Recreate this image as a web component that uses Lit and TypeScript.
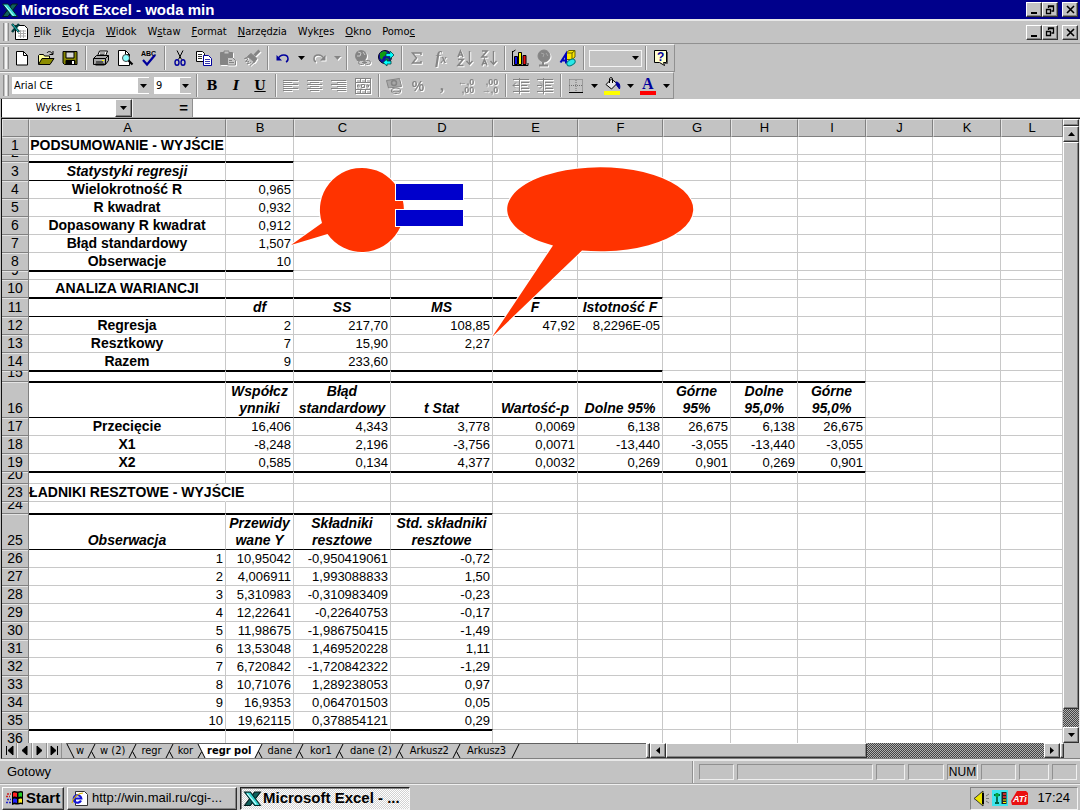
import { LitElement, html, svg, css, nothing } from "lit";
import { customElement } from "lit/decorators.js";
import { classMap } from "lit/directives/class-map.js";
import { styleMap } from "lit/directives/style-map.js";

type Align = "c" | "r";
interface Row {
  n: number;
  h: number;
  a?: string;
  v?: string[];
  style?: "head";
  rule?: "thin" | "thick";
  span?: number;
}

const LETTERS = ["A", "B", "C", "D", "E", "F", "G", "H", "I", "J", "K", "L"];
const WIDTHS = [197, 68, 97, 102, 85, 85, 68, 67, 68, 67, 68];

const ROWS: Row[] = [
  { n: 1, h: 18, a: "PODSUMOWANIE - WYJŚCIE" },
  { n: 2, h: 7, rule: "thick", span: 2 },
  { n: 3, h: 19, a: "Statystyki regresji", style: "head", rule: "thin", span: 2 },
  { n: 4, h: 18, a: "Wielokrotność R", v: ["0,965"] },
  { n: 5, h: 18, a: "R kwadrat", v: ["0,932"] },
  { n: 6, h: 18, a: "Dopasowany R kwadrat", v: ["0,912"] },
  { n: 7, h: 18, a: "Błąd standardowy", v: ["1,507"] },
  { n: 8, h: 18, a: "Obserwacje", v: ["10"], rule: "thick", span: 2 },
  { n: 9, h: 9 },
  { n: 10, h: 18, a: "ANALIZA WARIANCJI", rule: "thick", span: 6 },
  { n: 11, h: 19, style: "head", v: ["df", "SS", "MS", "F", "Istotność F"], rule: "thin", span: 6 },
  { n: 12, h: 18, a: "Regresja", v: ["2", "217,70", "108,85", "47,92", "8,2296E-05"] },
  { n: 13, h: 18, a: "Resztkowy", v: ["7", "15,90", "2,27"] },
  { n: 14, h: 18, a: "Razem", v: ["9", "233,60"], rule: "thick", span: 6 },
  { n: 15, h: 11, rule: "thick", span: 9 },
  {
    n: 16, h: 36, style: "head", rule: "thin", span: 9,
    v: ["Współcz\nynniki", "Błąd\nstandardowy", "t Stat", "Wartość-p", "Dolne 95%", "Górne\n95%", "Dolne\n95,0%", "Górne\n95,0%"],
  },
  { n: 17, h: 18, a: "Przecięcie", v: ["16,406", "4,343", "3,778", "0,0069", "6,138", "26,675", "6,138", "26,675"] },
  { n: 18, h: 18, a: "X1", v: ["-8,248", "2,196", "-3,756", "0,0071", "-13,440", "-3,055", "-13,440", "-3,055"] },
  { n: 19, h: 18, a: "X2", v: ["0,585", "0,134", "4,377", "0,0032", "0,269", "0,901", "0,269", "0,901"], rule: "thick", span: 9 },
  { n: 20, h: 12 },
  { n: 23, h: 18, a: "SKŁADNIKI RESZTOWE - WYJŚCIE" },
  { n: 24, h: 12, rule: "thick", span: 4 },
  {
    n: 25, h: 36, a: "Obserwacja", style: "head", rule: "thin", span: 4,
    v: ["Przewidy\nwane Y", "Składniki\nresztowe", "Std. składniki\nresztowe"],
  },
  ...[
    ["10,95042", "-0,950419061", "-0,72"],
    ["4,006911", "1,993088833", "1,50"],
    ["5,310983", "-0,310983409", "-0,23"],
    ["12,22641", "-0,22640753", "-0,17"],
    ["11,98675", "-1,986750415", "-1,49"],
    ["13,53048", "1,469520228", "1,11"],
    ["6,720842", "-1,720842322", "-1,29"],
    ["10,71076", "1,289238053", "0,97"],
    ["16,9353", "0,064701503", "0,05"],
    ["19,62115", "0,378854121", "0,29"],
  ].map((v, i): Row => ({ n: 26 + i, h: 18, a: String(i + 1), v, ...(i === 9 ? { rule: "thick" as const, span: 4 } : {}) })),
  { n: 36, h: 18 },
];

const pic = (body: unknown, w = 18, h = 18) =>
  html`<svg class="pic" width=${w} height=${h} viewBox="0 0 ${w} ${h}" fill="none" stroke="#000" aria-hidden="true">${body}</svg>`;

const lines = (rows: number[][]) => svg`<path stroke="#848484" shape-rendering="crispEdges" d=${rows.map(([x, y, w]) => `M${x} ${y}.5h${w}`).join("")}/>`;
const dropArrow = (c = "#000") => html`<svg class="pic" width="7" height="4" viewBox="0 0 7 4" aria-hidden="true"><path d="M0 0h7L3.500 4z" fill=${c}/></svg>`;

const xlLogo = (s: number) => html`<svg class="pic" width=${s} height=${s} viewBox="0 0 16 16" aria-hidden="true">
  <path d="M10 2h5.500L6 14.500H.5z" fill="#10605c" stroke="#001c1c"/>
  <path d="M.5 2H6l9.500 12.500H10z" fill="#35d6d0" stroke="#002a2a"/>
  <path d="M3 3.500l8.500 10" stroke="#d5ffff"/></svg>`;

const I = {
  fresh: pic(svg`<path d="M3.500 2.500h7l4 4v9.500h-11z" fill="#fff"/><path d="M10.500 2.500v4h4"/>`),
  open: pic(svg`<path d="M1.500 15V6.500l1-1h4l1 1.500h5V9" fill="#ffff9c"/><path d="M1.500 15.500L5 9.500h12l-4 6z" fill="#8c8c00"/><path d="M10 4c1-2 4-2 5.500 1M16 2v3.500h-3.500"/>`),
  save: pic(svg`<path d="M2 2.500h14v13H3.500L2 14z" fill="#848400"/><path d="M5 3h8v6H5z" fill="#d8d8d8"/><path d="M5 11.500h9v4H5z" fill="#000"/><path d="M11 12h2v3h-2z" fill="#fff" stroke="none"/>`),
  print: pic(svg`<path d="M5.500 7l2-5h8l-2 5" fill="#fff"/><path d="M8 4h5M7.500 5.500h5" stroke-width=".7"/><path d="M1.500 9.500l3-3h12v5l-3 4h-12z" fill="#a8a8a8"/><path d="M1.500 9.500h12v6M13.500 9.500l3-3M4 13h7"/><path d="M3.500 15.500h9" stroke-width="2"/><path d="M10 11.500h2" stroke="#ff0"/>`),
  preview: pic(svg`<path d="M2.500 1.500h7l4 4v11h-11z" fill="#fff"/><path d="M9.500 1.500v4h4"/><circle cx="10" cy="9" r="3.500" fill="#8ff" stroke="#444"/><path d="M12.500 11.500l4 4" stroke-width="2.200"/>`),
  spell: html`<svg class="pic" width="18" height="18" viewBox="0 0 18 18" aria-hidden="true"><text x="1" y="6.500" class="tiny">ABC</text><path d="M3 11l4 4.500L15 6" fill="none" stroke="#00009c" stroke-width="2.200"/></svg>`,
  cut: pic(svg`<path d="M6 1.500l4.500 9M12 1.500l-4.500 9"/><ellipse cx="6" cy="13.500" rx="2" ry="2.800" stroke="#00009c" stroke-width="1.400"/><ellipse cx="12" cy="13.500" rx="2" ry="2.800" stroke="#00009c" stroke-width="1.400"/>`),
  copy: pic(svg`<path d="M1.500 2.500h6l2 2v8h-8z" fill="#fff"/><path d="M3 5.500h4M3 7.500h4M3 9.500h4" stroke-width=".8"/><path d="M8.500 6.500h5l3 3v7h-8z" fill="#fff" stroke="#00009c"/><path d="M10 10.500h5M10 12.500h5M10 14.500h5" stroke="#00009c" stroke-width=".8"/>`),
  paste: pic(svg`<path d="M1.500 3.500h12v12h-12z" fill="#848484" stroke="#848484"/><path d="M5 2h5v3H5z" fill="#c3c3c3" stroke="#848484"/><path d="M8.500 8.500h5l3 3v4.500h-8z" fill="#c9c9c9" stroke="#848484"/><path d="M10 11.500h3M10 13.500h5" stroke="#848484"/>`),
  brush: pic(svg`<path d="M16.500 1.500l-5 5" stroke="#848484" stroke-width="3"/><path d="M8 4.500l6 5-2.500 4-7-6z" fill="#848484" stroke="#848484"/><path d="M5 8L1.500 9.500l3.500.5-2.500 2.500 3.500-.5-2 3 4-1.500M11 13l-4 3.500" stroke="#848484"/>`),
  undo: pic(svg`<path d="M3.500 10.500c3-6 10-5.500 10.500-1 .2 2-1 3-2 3.500" stroke="#00009c" stroke-width="1.500"/><path d="M2.500 6v5.500H8z" fill="#00009c" stroke="none"/>`),
  redo: pic(svg`<path d="M14.500 10.500c-3-6-10-5.500-10.500-1-.2 2 1 3 2 3.500" stroke="#848484" stroke-width="1.500"/><path d="M15.500 6v5.500H10z" fill="#848484" stroke="none"/>`),
  link: pic(svg`<circle cx="8" cy="7" r="6" fill="#848484" stroke="none"/><path d="M5 3l3 1-1 3-3 0M10 3l2 3" stroke="#c9c9c9"/><rect x="5.500" y="11.500" width="6" height="4" rx="2" fill="#c9c9c9" stroke="#848484"/><rect x="11.500" y="11.500" width="6" height="4" rx="2" fill="#c9c9c9" stroke="#848484"/><path d="M9 13.500h5" stroke="#848484"/>`),
  web: pic(svg`<circle cx="8" cy="8" r="6.500" fill="#1010a0" stroke="#002"/><path d="M3 4l4-2 3 1-1 3-3 2-1 3-2-2zM9 9l3 1-2 4-2-2z" fill="#109c10" stroke="none"/><path d="M9 4.500h4V2l4 4-4 4V7.500H9z" fill="#0ff" stroke="#044" stroke-width=".8"/><path d="M14 12h-4v-2l-4 3.500 4 3.500v-2h4z" fill="#0ff" stroke="#044" stroke-width=".8"/>`),
  sum: pic(svg`<path d="M13 6V4H4.500l4 5-4 5H13v-2" stroke="#848484" stroke-width="1.500"/>`),
  fx: html`<span class="glyph fx">f<small>x</small></span>`,
  az: pic(svg`<path d="M2 8l2.500-6L7 8M3 6h3M2 10.500h5L2 16.500h5.500" stroke="#848484" stroke-width="1.600"/><path d="M13.500 2v13M10.500 12l3 3.500 3-3.500" stroke="#848484" stroke-width="1.400"/>`),
  za: pic(svg`<path d="M2 2h5L2 8h5.500M2 16.500l2.500-6 2.500 6M3 14.500h3" stroke="#848484" stroke-width="1.600"/><path d="M13.500 2v13M10.500 12l3 3.500 3-3.500" stroke="#848484" stroke-width="1.400"/>`),
  chart: pic(svg`<path d="M1.500 2v14.500H17M1.500 3l3-2M17 16.500V14"/><path d="M3.500 7.500h3v8h-3z" fill="#1010f0"/><path d="M7.500 3.500h3v12h-3z" fill="#ff0"/><path d="M12 6.500h3v9h-3z" fill="#f01010"/>`),
  map: pic(svg`<circle cx="9" cy="7" r="6" fill="#848484" stroke="#848484"/><path d="M8 13v3M4 16.500h9" stroke="#848484" stroke-width="2"/><path d="M6 4l3 1-1 3M11 4l2 3" stroke="#a5a5a5"/>`),
  draw: pic(svg`<path d="M7 4l3-2.500h6V8l-3 2.500H7z" fill="#ffe800" stroke="#660"/><path d="M7 4h6v6M13 4l3-2.500" stroke="#660"/><path d="M1.500 13.500L7 5v9.500M3 11.500h4" stroke="#0000c0" stroke-width="2"/><ellipse cx="12" cy="13.500" rx="4.500" ry="2.800" transform="rotate(-30 12 13.500)" fill="#27e8e8" stroke="#077"/>`),
  help: html`<svg class="pic" width="18" height="18" viewBox="0 0 18 18" aria-hidden="true"><path d="M2.500 1.500h12v12h-3l1 3-5-3h-5z" fill="#ffffd0" stroke="#000"/><path d="M15.500 3v11.500h-3" fill="none" stroke="#555"/><text x="5" y="12" class="q">?</text></svg>`,
  left: pic(lines([[1, 3, 15], [1, 5, 9], [1, 7, 15], [1, 9, 9], [1, 11, 15], [1, 13, 9]])),
  center: pic(lines([[1, 3, 15], [4, 5, 9], [1, 7, 15], [4, 9, 9], [1, 11, 15], [4, 13, 9]])),
  right: pic(lines([[1, 3, 15], [7, 5, 9], [1, 7, 15], [7, 9, 9], [1, 11, 15], [7, 13, 9]])),
  merge: pic(svg`<g shape-rendering="crispEdges" stroke="#848484"><path d="M1.500 1.500h15v15h-15zM1 5.500h16M1 12.500h16M6.500 2v3M11.500 2v3M6.500 13v3M11.500 13v3"/></g><path d="M3 9h3M15 9h-3M4.500 7.500L3 9l1.500 1.500M13.500 7.500L15 9l-1.500 1.500M7.500 7.500h3v3h-3z" stroke="#848484"/>`),
  money: pic(svg`<path d="M1.500 3.500l13-2 2 8-13 1.500z" fill="#a8a8a8" stroke="#848484"/><circle cx="9" cy="6" r="2.500" stroke="#848484" stroke-width="1.500"/><ellipse cx="11" cy="13" rx="4.500" ry="2" stroke="#848484"/><path d="M6.500 13v2c1 2 8 2 9 0v-2" stroke="#848484"/>`),
  incDec: html`<span class="glyph dec"><span>←,0</span><span>,00</span></span>`,
  decDec: html`<span class="glyph dec"><span>,00</span><span>→,0</span></span>`,
  outdent: pic(svg`${lines([[1, 2, 16], [9, 5, 8], [9, 8, 6], [9, 11, 8], [1, 14, 16]])}<path d="M1 8.500h6M4 5.500l-3 3 3 3M7.500 1v16" stroke="#848484"/>`),
  indent: pic(svg`${lines([[1, 2, 16], [9, 5, 8], [9, 8, 6], [9, 11, 8], [1, 14, 16]])}<path d="M1 8.500h5M4 5.500l3 3-3 3M7.500 1v16" stroke="#848484"/>`),
  borders: pic(svg`<path d="M2.500 2.500h13v12M2.500 2.500v12M9 3v12M2 8.500h13" stroke="#707070" stroke-dasharray="1 1"/><path d="M2 15.500h14"/>`),
  fill: pic(svg`<path d="M3 7.500L8.500 2l5.500 4.500-5.500 5.500z" fill="#e8e8e8"/><path d="M6.500 6V2c0-2 3-2 3 0v4"/><path d="M13 5c3 0 4.500 3 3.500 7l-3-4z" fill="#00009c" stroke="#00009c"/><path d="M1 14h16v4H1z" fill="#ff0" stroke="none"/>`),
  color: html`<svg class="pic" width="18" height="18" viewBox="0 0 18 18" aria-hidden="true"><text x="3" y="12" class="bigA">A</text><path d="M1 14h16v4H1z" fill="#f00"/></svg>`,
};

type Tool = { k: string; label: string; off?: boolean; drop?: boolean } | "|";
const STANDARD: Tool[] = [
  { k: "fresh", label: "Nowy" }, { k: "open", label: "Otwórz" }, { k: "save", label: "Zapisz" }, "|",
  { k: "print", label: "Drukuj" }, { k: "preview", label: "Podgląd wydruku" }, { k: "spell", label: "Pisownia" }, "|",
  { k: "cut", label: "Wytnij" }, { k: "copy", label: "Kopiuj" }, { k: "paste", label: "Wklej", off: true }, { k: "brush", label: "Malarz formatów", off: true }, "|",
  { k: "undo", label: "Cofnij", drop: true }, { k: "redo", label: "Ponów", off: true, drop: true }, "|",
  { k: "link", label: "Hiperłącze", off: true }, { k: "web", label: "Sieć Web" }, "|",
  { k: "sum", label: "Autosumowanie", off: true }, { k: "fx", label: "Wklej funkcję", off: true }, { k: "az", label: "Sortuj rosnąco", off: true }, { k: "za", label: "Sortuj malejąco", off: true }, "|",
  { k: "chart", label: "Kreator wykresów" }, { k: "map", label: "Mapa", off: true }, { k: "draw", label: "Rysowanie" }, "|",
];
const FORMAT: Tool[] = [
  { k: "left", label: "Do lewej", off: true }, { k: "center", label: "Do środka", off: true }, { k: "right", label: "Do prawej", off: true }, { k: "merge", label: "Scal", off: true }, "|",
  { k: "money", label: "Walutowy", off: true }, { k: "percent", label: "Procentowy", off: true }, { k: "comma", label: "Dziesiętny", off: true }, { k: "incDec", label: "Zwiększ dziesiętne", off: true }, { k: "decDec", label: "Zmniejsz dziesiętne", off: true }, "|",
  { k: "outdent", label: "Zmniejsz wcięcie", off: true }, { k: "indent", label: "Zwiększ wcięcie", off: true }, "|",
  { k: "borders", label: "Obramowania", drop: true }, { k: "fill", label: "Kolor wypełnienia", drop: true }, { k: "color", label: "Kolor czcionki", drop: true },
];
const MENU = [["", "P", "lik"], ["", "E", "dycja"], ["", "W", "idok"], ["W", "s", "taw"], ["", "F", "ormat"], ["", "N", "arzędzia"], ["Wyk", "r", "es"], ["", "O", "kno"], ["Pomo", "c", ""]];
const TABS = ["w", "w (2)", "regr", "kor", "regr pol", "dane", "kor1", "dane (2)", "Arkusz2", "Arkusz3"];
const ACTIVE = 4;

@customElement("app-root")
export class AppRoot extends LitElement {
  static styles = css`
    :host {
      display: flex; flex-direction: column; height: 100vh; overflow: hidden;
      background: #c3c3c3; color: #000;
      font: 11px/14px "DejaVu Sans Condensed", "DejaVu Sans", sans-serif;
    }
    * { box-sizing: border-box; }
    button, select, input { font: inherit; color: inherit; margin: 0; padding: 0; border: 0; border-radius: 0; background: none; }
    button { display: flex; align-items: center; justify-content: center; flex: none; }
    .pic { display: block; flex: none; overflow: visible; }
    .raised { background: #c3c3c3; border: 1px solid; border-color: #fff #303030 #303030 #fff; box-shadow: inset -1px -1px #848484; }
    .title { display: flex; align-items: center; height: 19px; flex: none; padding: 0 2px; background: #00008b; color: #fff; gap: 3px; }
    .title h1 { flex: 1; margin: 0; font: bold 15px/18px "Liberation Sans", Arial, sans-serif; white-space: nowrap; }
    .wins { display: flex; }
    .wins button { width: 16px; height: 15px; }
    .wins button:last-child { margin-left: 4px; }
    .menubar { display: flex; align-items: center; height: 25px; flex: none; border-top: 2px solid #e8e8e8; border-bottom: 1px solid #909090; padding: 0 2px 0 3px; }
    .grip { width: 6px; align-self: stretch; margin: 2px 0; border: solid; border-width: 0 1px; border-color: #f4f4f4 #8c8c8c; position: relative; flex: none; }
    .grip::after { content: ""; position: absolute; inset: 0 1px; border: solid; border-width: 0 1px; border-color: #8c8c8c #f4f4f4; }
    .menu { display: flex; gap: 11px; flex: 1; margin-left: 5px; }
    .book { margin-left: 2px; }
    .bar { display: flex; align-items: center; align-self: flex-start; height: 28px; flex: none; padding: 0 1px 0 3px; border: solid; border-width: 1px 1px 1px 0; border-color: #f4f4f4 #909090 #909090; }
    .bar.low { height: 27px; }
    .tool { width: 24px; height: 22px; }
    .drop { width: 12px; height: 22px; }
    .off { filter: drop-shadow(1px 1px 0 #fff); color: #848484; }
    .sep { width: 7px; align-self: stretch; margin: 1px 0; position: relative; flex: none; background: linear-gradient(90deg, transparent 3px, #8c8c8c 3px 4px, #f4f4f4 4px 5px, transparent 5px); }
    .first { margin-left: 1px; }
    .combo { position: relative; height: 17px; flex: none; background: #fff; }
    .combo select { appearance: none; width: 100%; height: 17px; padding-left: 2px; display: block; line-height: 17px; outline: 0; }
    .combo .cap { position: absolute; right: 0; top: 1px; bottom: 1px; width: 11px; background: #c3c3c3; display: flex; align-items: center; justify-content: center; pointer-events: none; }
    .font { width: 137px; margin: 0 5px 0 3px; }
    .size { width: 37px; margin-right: 2px; }
    .zoom { width: 53px; margin-left: 2px; background: #c3c3c3; border: 1px solid #f4f4f4; }
    .zoom select { height: 15px; }
    .glyph { font: bold 16px/18px "Liberation Serif", serif; }
    .bld { font: bold 13px/18px "DejaVu Serif", serif; }
    .itl { font: italic bold 13px/18px "DejaVu Serif", serif; }
    .und { font: bold 13px/18px "DejaVu Serif", serif; text-decoration: underline; }
    .fx { font-style: italic; }
    .fx small { font-size: 12px; }
    .pct { font: bold 14px/18px "Liberation Sans", sans-serif; }
    .dec { display: flex; flex-direction: column; align-items: flex-end; font: bold 9px/8px "Liberation Sans", sans-serif; }
    .tiny { font: bold 7px "Liberation Sans", sans-serif; }
    .q { font: bold 12px "Liberation Sans", sans-serif; fill: #00009c; }
    .bigA { font: bold 16px "Liberation Serif", serif; fill: #00009c; }
    .formula { display: flex; height: 19px; flex: none; margin-left: 1px; border-bottom: 1px solid #a0a0a0; border-left: 1px solid #000; }
    .name { width: 113px; background: #fff; text-align: center; outline: 0; }
    .formula .raised { width: 17px; }
    .eq { width: 60px; padding: 0 4px; border-left: 1px solid #f0f0f0; font: bold 15px/18px "Liberation Sans", sans-serif; text-align: right; justify-content: flex-end; }
    .fx-in { flex: 1; min-width: 0; background: #fff; border-left: 1px solid #909090; outline: 0; padding: 0 4px; }
    .work { display: flex; flex: 1; min-height: 0; margin-left: 1px; border-top: 1px solid #101010; border-left: 1px solid #101010; }
    .sheet { flex: 1; min-width: 0; position: relative; overflow: hidden; background: #fff; }
    table { border-spacing: 0; table-layout: fixed; width: 100%; font: 13px/17px "Liberation Sans", Arial, sans-serif; }
    th, td { padding: 0; }
    .hcol { width: 27px; }
    thead th { height: 18px; background: #c3c3c3; font-weight: normal; line-height: 16px; border: 1px solid; border-color: #e4e4e4 #808080 #808080 #e4e4e4; }
    tbody th { background: #c3c3c3; font-weight: normal; border: solid; border-width: 0 1px 1px 0; border-color: #808080; box-shadow: inset 0 1px #e4e4e4; }
    td { border: solid; border-width: 0 1px 1px 0; border-color: #c8c8c8; }
    .in { display: flex; align-items: flex-end; overflow: hidden; white-space: pre; justify-content: flex-end; padding: 0 2px; }
    th .in { justify-content: center; font-size: 14px; padding: 0; }
    .c .in { justify-content: center; text-align: center; font-weight: bold; font-size: 14px; padding: 0; }
    .head .in { font-style: italic; }
    .spill { border-right-color: transparent; clip-path: inset(0 -80px 0 0); }
    .spill .in { overflow: visible; }
    .thin { border-bottom-color: #000; }
    .thick { border-bottom-color: #000; box-shadow: 0 1px #000; }
    .shapes { position: absolute; left: 0; top: 0; pointer-events: none; }
    .vscroll { width: 17px; flex: none; display: flex; flex-direction: column; background: #c3c3c3; border-right: 1px solid #e4e4e4; }
    .split { height: 7px; }
    .vscroll .arr { height: 16px; width: 16px; }
    .thumb { flex: 1; }
    .dither { background: repeating-conic-gradient(#444 0 25%, #b0b0b0 0 50%) 0 0 / 2px 2px; }
    .vscroll .dither { height: 18px; }
    .tabs { display: flex; height: 16px; flex: none; margin-left: 1px; border-left: 1px solid #101010; align-items: stretch; border-bottom: 1px solid #808080; }
    .nav { width: 15px; border: solid; border-width: 0 1px 0 0; border-color: #909090; }
    .nav + .nav { box-shadow: inset 1px 0 #f0f0f0; }
    .tablist { display: flex; flex: 1; min-width: 0; margin-left: 4px; border-top: 1px solid #606060; }
    .tab { line-height: 14px; white-space: nowrap; }
    .tab.on { font-weight: bold; background: #fff; }
    .hscroll { display: flex; width: 434px; flex: none; }
    .hscroll .bar1 { width: 4px; }
    .hscroll .arr { width: 16px; }
    .hthumb { width: 201px; flex: none; }
    .hscroll .dither { flex: 1; }
    .status { display: flex; align-items: center; height: 25px; flex: none; border-top: 2px solid #e8e8e8; border-bottom: 1px solid #a0a0a0; padding: 0 3px 0 7px; gap: 3px; font: 13px/16px "Liberation Sans", Arial, sans-serif; }
    .ready { flex: 1; align-self: stretch; line-height: 21px; border-right: 1px solid #909090; box-shadow: 1px 0 #f0f0f0; margin-right: 3px; }
    .panel { height: 16px; flex: none; border: 1px solid; border-color: #909090 #f0f0f0 #f0f0f0 #909090; font-size: 12px; line-height: 14px; text-align: center; }
    .task { display: flex; align-items: center; height: 26px; flex: none; padding: 2px 2px 1px; border-top: 1px solid #f0f0f0; gap: 3px; font: 13px/18px "Liberation Sans", Arial, sans-serif; }
    .task button { height: 23px; justify-content: flex-start; gap: 3px; padding: 0 3px; white-space: nowrap; }
    .task .start { width: 62px; font-weight: bold; font-size: 15px; gap: 2px; }
    .win { width: 170px; }
    .task .pressed { font-weight: bold; font-size: 15px; gap: 2px; border: 1px solid; border-color: #202020 #f4f4f4 #f4f4f4 #202020; background: repeating-conic-gradient(#fff 0 25%, #d2d2d2 0 50%) 0 0 / 2px 2px; box-shadow: inset 1px 1px #848484; }
    .tray { display: flex; align-items: center; gap: 2px; margin-left: auto; height: 23px; width: 108px; padding: 0 7px 0 2px; border: 1px solid; border-color: #848484 #f4f4f4 #f4f4f4 #848484; }
    .clock { margin-left: auto; }
    .ati { font: italic bold 9px "Liberation Sans", sans-serif; fill: #fff; }
  `;

  private winButtons() {
    return html`<div class="wins">
      <button class="raised" aria-label="Minimalizuj">${pic(svg`<path d="M1 8h6" stroke-width="2"/>`, 9, 9)}</button>
      <button class="raised" aria-label="Przywróć">${pic(svg`<path d="M3.500 3V1h5v5h-2M3 1.500h6M1.500 4.500h4v4h-4zM1 4.500h5" stroke-width="1.300"/>`, 10, 10)}</button>
      <button class="raised" aria-label="Zamknij">${pic(svg`<path d="M1 1l7 7M8 1l-7 7" stroke-width="1.600"/>`, 9, 9)}</button>
    </div>`;
  }

  private tool(t: Tool) {
    if (t === "|") return html`<span class="sep"></span>`;
    const glyph = t.k === "percent" ? html`<span class="pct">%</span>` : t.k === "comma" ? html`<span class="glyph">,</span>` : (I as any)[t.k];
    return html`<button class=${classMap({ tool: true, off: !!t.off })} aria-label=${t.label}>${glyph}</button>${t.drop
      ? html`<button class=${classMap({ drop: true, off: !!t.off })} aria-label="${t.label}: lista">${dropArrow(t.off ? "#848484" : "#000")}</button>` : nothing}`;
  }

  private row(r: Row) {
    return html`<tr>
      <th scope="row"><div class="in" style=${styleMap({ height: `${r.h - 1}px` })}>${r.n}</div></th>
      ${LETTERS.map((_, i) => {
        const text = i === 0 ? r.a ?? "" : r.v?.[i - 1] ?? "";
        const ruled = i < (r.span ?? 0);
        const align: Align = r.style === "head" || (i === 0 && r.n < 26) ? "c" : "r";
        return html`<td class=${classMap({ c: align === "c", head: r.style === "head", spill: r.n === 23 && i === 0, thin: ruled && r.rule === "thin", thick: ruled && r.rule === "thick" })}
          ><div class="in" style=${styleMap({ height: `${r.h - 1}px` })}>${text}</div></td>`;
      })}
    </tr>`;
  }

  private tabEdge(i: number) {
    const on = i === ACTIVE, prevOn = i - 1 === ACTIVE;
    if (i === 0) return pic(svg`<path d="M1 0l7 14"/>`, 10, 14);
    if (on) return pic(svg`<path d="M5 0h11v14h-4z" fill="#fff" stroke="none"/><path d="M5 0l7 14M5 14l3.500-6"/>`, 14, 14);
    return pic(svg`${prevOn ? svg`<path d="M0 0h11L4 14H0z" fill="#fff" stroke="none"/>` : nothing}<path d="M11 0L4 14M7.500 7.500L11 14"/>`, i > ACTIVE + 1 ? 18 : 16, 14);
  }

  render() {
    return html`
      <header class="title">${xlLogo(16)}<h1>Microsoft Excel - woda min</h1>${this.winButtons()}</header>
      <nav class="menubar">
        <span class="grip"></span>
        <svg class="pic book" width="18" height="18" viewBox="0 0 18 18" aria-hidden="true"><path d="M4.500 2.500h9l3 3v11h-12z" fill="#fff" stroke="#000"/><path d="M7 8h8M7 10.500h8M7 13h8M9.500 7v8M12.500 7v8" stroke="#aaa"/><path d="M1 1l7 8M8 1L1 9" stroke="#003c3c" stroke-width="2.500"/><path d="M1.500 1.500l6 7" stroke="#2cc"/></svg>
        <div class="menu">${MENU.map(([a, u, b]) => html`<button>${a}<u>${u}</u>${b}</button>`)}</div>
        ${this.winButtons()}
      </nav>
      <div class="bar"><span class="grip"></span><span class="first"></span>${STANDARD.map((t) => this.tool(t))}
        <span class="combo zoom"><select aria-label="Powiększenie"><option></option></select><span class="cap">${dropArrow()}</span></span>
        <span class="sep"></span><button class="tool" aria-label="Pomoc">${I.help}</button>
      </div>
      <div class="bar low"><span class="grip"></span>
        <span class="combo font"><select aria-label="Czcionka"><option>Arial CE</option></select><span class="cap">${dropArrow()}</span></span>
        <span class="combo size"><select aria-label="Rozmiar"><option>9</option></select><span class="cap">${dropArrow()}</span></span>
        <span class="sep"></span>
        <button class="tool bld" aria-label="Pogrubienie">B</button><button class="tool itl" aria-label="Kursywa">I</button><button class="tool und" aria-label="Podkreślenie">U</button>
        <span class="sep"></span>${FORMAT.map((t) => this.tool(t))}
      </div>
      <div class="formula">
        <input class="name" aria-label="Pole nazwy" value="Wykres 1" />
        <button class="raised" aria-label="Lista nazw">${dropArrow()}</button>
        <button class="eq" aria-label="Edytuj formułę">=</button>
        <input class="fx-in" aria-label="Pasek formuły" />
      </div>
      <main class="work">
        <div class="sheet">
          <table>
            <colgroup><col class="hcol" />${WIDTHS.map((w) => html`<col style=${styleMap({ width: `${w}px` })} />`)}<col /></colgroup>
            <thead><tr><th></th>${LETTERS.map((l) => html`<th scope="col">${l}</th>`)}</tr></thead>
            <tbody>${ROWS.map((r) => this.row(r))}</tbody>
          </table>
          <svg class="shapes" width="720" height="240" viewBox="2 119 720 240" aria-hidden="true">
            <g fill="#ff3300" stroke="#fff" stroke-width="2" paint-order="stroke">
              <path d="M322 223L291 245l36.500-11A42 42 0 1 0 322 223z"/>
              <path d="M553 245.500L492 337l90-86.500A93 42 0 1 0 553 245.500z"/>
            </g>
            <g fill="#0000cc" stroke="#fff" stroke-width="2" paint-order="stroke">
              <path d="M396 184h67v16h-67zM396 210h67v16h-67z"/>
            </g>
          </svg>
        </div>
        <div class="vscroll">
          <div class="split raised"></div>
          <button class="arr raised" aria-label="W górę">${pic(svg`<path d="M0 4h7L3.500 0z" fill="#000" stroke="none"/>`, 7, 4)}</button>
          <div class="thumb raised"></div><div class="dither"></div>
          <button class="arr raised" aria-label="W dół">${dropArrow()}</button>
        </div>
      </main>
      <div class="tabs">
        ${[["Pierwszy", "M1.500 0v9M8 0v9L3 4.500z"], ["Poprzedni", "M7 0v9L2 4.500z"], ["Następny", "M2 0v9l5-4.500z"], ["Ostatni", "M7.500 0v9M1 0v9l5-4.500z"]].map(
          ([l, d]) => html`<button class="nav" aria-label=${l}>${pic(svg`<path d=${d} fill="#000" stroke-width="1"/>`, 9, 9)}</button>`)}
        <div class="tablist">
          ${TABS.map((t, i) => html`${this.tabEdge(i)}<button class=${classMap({ tab: true, on: i === ACTIVE })}>${t}</button>`)}
          ${pic(svg`<path d="M13 0L6 14"/>`, 18, 14)}
        </div>
        <div class="hscroll">
          <span class="bar1 raised"></span>
          <button class="arr raised" aria-label="W lewo">${pic(svg`<path d="M4 0v7L0 3.500z" fill="#000" stroke="none"/>`, 4, 7)}</button>
          <span class="hthumb raised"></span><span class="dither"></span>
          <button class="arr raised" aria-label="W prawo">${pic(svg`<path d="M0 0v7l4-3.500z" fill="#000" stroke="none"/>`, 4, 7)}</button>
          <span class="bar1 raised"></span><span class="arr"></span>
        </div>
      </div>
      <footer class="status">
        <span class="ready">Gotowy</span>
        ${[35, 136, 29, 36, 31, 35, 30, 25].map((w, i) => html`<span class="panel" style=${styleMap({ width: `${w}px` })}>${i === 4 ? "NUM" : nothing}</span>`)}
      </footer>
      <footer class="task">
        <button class="start raised">
          <svg class="pic" width="18" height="16" viewBox="0 0 18 16" aria-hidden="true"><path d="M6 2c3-2 4 0 6-.5 2-.5 3-1 5 0v13c-2-1-3-.5-5 0s-3-1-6 .5z" fill="#000"/><path d="M7 3c2-1 3 0 4 0v4c-1 0-2-1-4 0z" fill="#f22"/><path d="M12.500 3c1 0 2-1 3.500 0v4c-1.500-1-2.500 0-3.500 0z" fill="#2c2"/><path d="M7 9c2-1 3 0 4 0v4c-1 0-2-1-4 0z" fill="#22f"/><path d="M12.500 9c1 0 2-1 3.500 0v4c-1.500-1-2.500 0-3.500 0z" fill="#fe2"/><path d="M1 4h4M0 6.500h4" stroke="#c22" stroke-width="1.500" stroke-dasharray="2 1"/><path d="M1 9.500h4M0 12.500h5" stroke="#22c" stroke-width="1.500" stroke-dasharray="2 1"/></svg>Start</button>
        <button class="win raised">
          <svg class="pic" width="18" height="17" viewBox="0 0 18 17" aria-hidden="true"><path d="M4.500 1.500h9l3 3v11h-12z" fill="#fff" stroke="#333"/><path d="M10 10.500A3.800 3.800 0 1 1 10.300 8.500H3" fill="none" stroke="#1414d8" stroke-width="2.200"/><path d="M1 13C2 8 7 3 12 3" fill="none" stroke="#d8b400" stroke-width="1.200"/></svg>http://win.mail.ru/cgi-...</button>
        <button class="win pressed">${xlLogo(17)}Microsoft Excel - ...</button>
        <div class="tray">
          <svg class="pic" width="17" height="17" viewBox="0 0 17 17" aria-hidden="true"><path d="M1 8.500l2-1.500L10 1v15L3 10z" fill="#ece400" stroke="#333"/><path d="M10 3v11" stroke="#000" stroke-width="2"/><path d="M13 6l3-2M13 8.500h3M13 11l3 2" stroke="#777"/></svg>
          <svg class="pic" width="16" height="16" viewBox="0 0 16 16" aria-hidden="true"><path d="M0 0h16v16H0z" fill="#3fe6ee"/><path d="M2 5h6M5 3v10M3 13h4" stroke="#064" stroke-width="1.800"/><circle cx="5" cy="5" r="2" fill="#0a4"/><path d="M9.500 2v12h5V2z" fill="#222"/><path d="M11 4h3M11 7h3" stroke="#f33" stroke-width="1.500"/><path d="M11 10h3M11 12.500h3" stroke="#ff0"/></svg>
          <svg class="pic" width="18" height="16" viewBox="0 0 18 16" aria-hidden="true"><path d="M1 11L7 1h9l2 2v11l-2 1H2z" fill="#ea1010"/><text x="3" y="12" class="ati">ATi</text></svg>
          <span class="clock">17:24</span>
        </div>
      </footer>
    `;
  }
}
